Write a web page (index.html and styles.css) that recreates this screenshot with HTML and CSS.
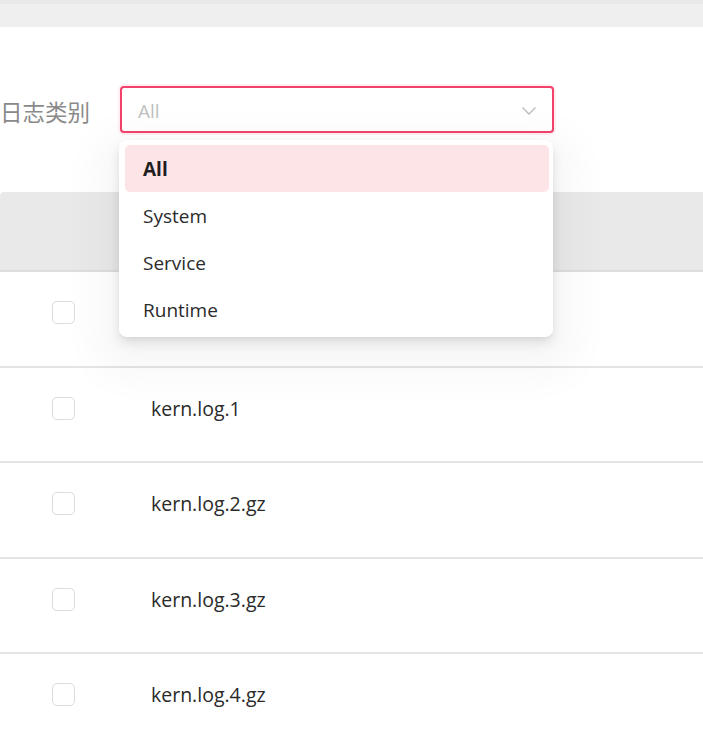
FILE: index.html
```html
<!DOCTYPE html>
<html lang="zh-CN">
<head>
    <meta charset="UTF-8">
    <meta name="viewport" content="width=device-width, initial-scale=1.0">
    <title>日志列表</title>
    <link rel="stylesheet" href="styles.css">
</head>
<body>
    <div class="top-bar"></div>

    <div class="filter-row">
        <label class="filter-label">日志类别</label>
        <div class="select-wrap">
            <div class="select open">
                <span class="select-value">All</span>
                <svg class="select-arrow" width="16" height="10" viewBox="0 0 16 10">
                    <path d="M1.5 1.5 L8 8 L14.5 1.5" fill="none" stroke="#bdbdbd" stroke-width="1.4"/>
                </svg>
            </div>
            <ul class="dropdown">
                <li class="option active">All</li>
                <li class="option">System</li>
                <li class="option">Service</li>
                <li class="option">Runtime</li>
            </ul>
        </div>
    </div>

    <div class="log-table">
        <div class="table-head"></div>
        <div class="table-row">
            <span class="checkbox"></span>
            <span class="file-name">kern.log</span>
        </div>
        <div class="table-row">
            <span class="checkbox"></span>
            <span class="file-name">kern.log.1</span>
        </div>
        <div class="table-row">
            <span class="checkbox"></span>
            <span class="file-name">kern.log.2.gz</span>
        </div>
        <div class="table-row">
            <span class="checkbox"></span>
            <span class="file-name">kern.log.3.gz</span>
        </div>
        <div class="table-row">
            <span class="checkbox"></span>
            <span class="file-name">kern.log.4.gz</span>
        </div>
    </div>
</body>
</html>
```

FILE: styles.css
```css
* {
    margin: 0;
    padding: 0;
    box-sizing: border-box;
}

body {
    font-family: 'Open Sans', 'Noto Sans CJK SC', sans-serif;
    background: #fff;
    color: #333;
    overflow: hidden;
}

.top-bar {
    height: 27px;
    background: #efefef;
    border-top: 4px solid #e8e8e8;
}

/* filter */
.filter-row {
    display: flex;
    align-items: center;
    margin-top: 59px;
    height: 47px;
}

.filter-label {
    width: 120px;
    padding-top: 2px;
    font-family: 'Noto Sans CJK SC', sans-serif;
    font-size: 22.5px;
    color: #8a8a8a;
}

.select-wrap {
    position: relative;
    width: 434px;
}

.select {
    display: flex;
    align-items: center;
    justify-content: space-between;
    height: 47px;
    padding: 2px 15px 0 16px;
    border: 2px solid #f2426c;
    border-radius: 4px;
    background: #fff;
}

.select.open {
    box-shadow: 0 0 0 2px rgba(255, 90, 120, 0.1);
}

.select-value {
    font-size: 19px;
    color: #c0c0c0;
}

/* dropdown menu */
.dropdown {
    position: absolute;
    top: 54px;
    left: -1px;
    width: 434px;
    list-style: none;
    padding: 5px 4px 4px 6px;
    background: #fff;
    border-radius: 8px;
    box-shadow: 0 6px 12px rgba(0, 0, 0, 0.1),
                0 3px 6px -4px rgba(0, 0, 0, 0.12),
                0 16px 40px 22px rgba(0, 0, 0, 0.035);
    z-index: 10;
}

.option {
    height: 47px;
    line-height: 49px;
    padding-left: 18px;
    font-size: 19px;
    color: #2b2b2b;
    border-radius: 5px;
}

.option.active {
    background: #fde4e6;
    font-weight: 700;
    color: #1e1e1e;
}

/* table */
.log-table {
    margin-top: 59px;
}

.table-head {
    height: 80px;
    background: #e9e9e9;
    border-bottom: 2px solid #dedede;
    border-radius: 4px 0 0 0;
}

.table-row {
    display: flex;
    align-items: center;
    height: 95.5px;
    padding-bottom: 12px;
    border-bottom: 2px solid #e4e4e4;
}

.checkbox {
    width: 23px;
    height: 23px;
    margin-left: 52px;
    border: 1.5px solid #dcdcdc;
    border-radius: 5px;
    background: #fff;
}

.file-name {
    margin-left: 76px;
    font-size: 19.5px;
    color: #2a2a2a;
}
```
